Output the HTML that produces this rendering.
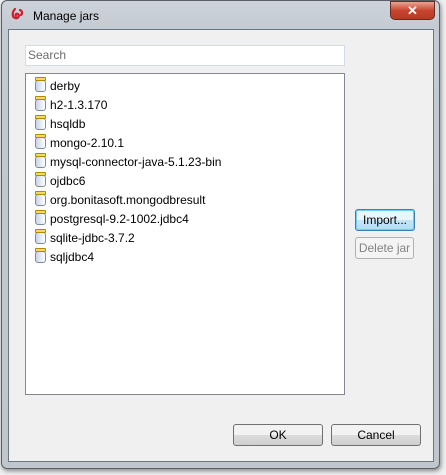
<!DOCTYPE html>
<html><head><style>
body{margin:0;width:446px;height:475px;overflow:hidden;background:#eef0f2;font-family:"Liberation Sans",sans-serif;font-size:12px;position:relative}
.win{position:absolute;left:1px;top:0;width:439px;height:469px;border-radius:6px;background:linear-gradient(#cdd3da,#c3cad2 30px,#bfc6ce);border:1px solid #5a5f66;box-sizing:border-box;box-shadow:1px 2px 5px rgba(0,0,0,.45)}
.client{position:absolute;left:8px;top:29px;width:426px;height:433px;background:#f0f0f0;border:1px solid #6d7680;box-sizing:border-box}
.title{position:absolute;left:31px;top:8px;font-size:12px;color:#000}
.close{position:absolute;left:388px;top:0;width:45px;height:19px;border-radius:0 0 5px 5px;background:linear-gradient(#e8a593,#c8452f 50%,#b83a22);border:1px solid #6a2a20;box-sizing:border-box;color:#fff;font-weight:bold;text-align:center;line-height:17px;font-size:13px}
.search{position:absolute;left:25px;top:45px;width:320px;height:21px;background:#fff;border:1px solid #d5dbe3;box-sizing:border-box;color:#6d6d6d;padding:3px 2px;line-height:13px}
.list{position:absolute;left:25px;top:73px;width:320px;height:322px;background:#fff;border:1px solid #828790;box-sizing:border-box}
.it{position:absolute;left:8px;height:19px;line-height:19px;color:#000}
.it i{display:inline-block;width:9px;height:10px;border:1px solid #7f8a9a;border-radius:3px;background:linear-gradient(90deg,#c8d4e6,#fff);vertical-align:-2px;margin-right:4px;position:relative;margin-left:1px}
.it i:before{content:"";position:absolute;left:-1px;top:-4px;width:9px;height:2px;border:1px solid #b08a00;background:#f3d96a;border-radius:1px}
.btn{position:absolute;height:22px;box-sizing:border-box;border:1px solid #707070;border-radius:3px;background:linear-gradient(#f2f2f2 50%,#dcdcdc 50%,#cfcfcf);text-align:center;line-height:20px;color:#000}
</style></head><body>
<div class="win">
<svg style="position:absolute;left:9px;top:6px" width="14" height="14" viewBox="0 0 14 14"><path d="M4 2 C1 5 1 10 4 11 C7 12 9 9 7 7 C5 6 4 8 5 9 M9 3 C11 4 12 6 10 8" stroke="#d01c2c" stroke-width="2.2" fill="none" stroke-linecap="round"/></svg>
<div class="title">Manage jars</div>
<div class="close">✕</div>
</div>
<div class="client"></div>
<div class="search">Search</div>
<div class="list">
<div class="it" style="top:3px"><i></i>derby</div>
<div class="it" style="top:22px"><i></i>h2-1.3.170</div>
<div class="it" style="top:41px"><i></i>hsqldb</div>
<div class="it" style="top:60px"><i></i>mongo-2.10.1</div>
<div class="it" style="top:79px"><i></i>mysql-connector-java-5.1.23-bin</div>
<div class="it" style="top:98px"><i></i>ojdbc6</div>
<div class="it" style="top:117px"><i></i>org.bonitasoft.mongodbresult</div>
<div class="it" style="top:136px"><i></i>postgresql-9.2-1002.jdbc4</div>
<div class="it" style="top:155px"><i></i>sqlite-jdbc-3.7.2</div>
<div class="it" style="top:174px"><i></i>sqljdbc4</div>
</div>
<div class="btn" style="left:355px;top:209px;width:60px;border-color:#3c7fb1;background:linear-gradient(#eaf6fd 50%,#c4e5f6 50%,#b4dcf2);box-shadow:inset 0 0 0 1px #6ed0f7">Import...</div>
<div class="btn" style="left:355px;top:237px;width:59px;border-color:#adb2b5;background:#f4f4f4;color:#838383">Delete jar</div>
<div class="btn" style="left:233px;top:424px;width:90px">OK</div>
<div class="btn" style="left:331px;top:424px;width:90px">Cancel</div>
</body></html>
